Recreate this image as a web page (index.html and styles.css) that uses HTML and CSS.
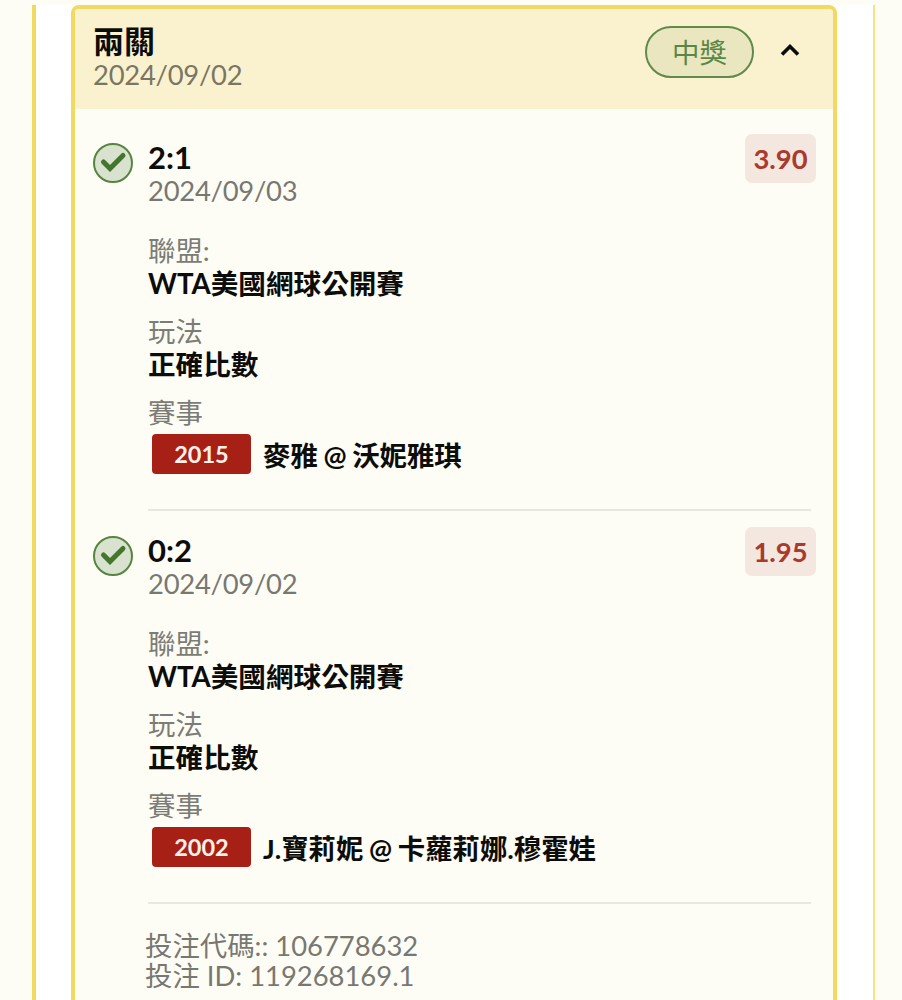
FILE: index.html
```html
<!DOCTYPE html>
<html lang="zh-Hant">
<head>
  <meta charset="UTF-8">
  <title>投注紀錄</title>
  <link rel="stylesheet" href="styles.css">
</head>
<body>
  <div class="bet-list">
    <div class="bet-card">
      <div class="bet-header">
        <div class="bet-title">
          <h2>兩關</h2>
          <p class="date">2024/09/02</p>
        </div>
        <span class="status">中獎</span>
        <svg class="arrow" width="20" height="14" viewBox="0 0 20 14">
          <path d="M2 11.5 L10 3.5 L18 11.5" />
        </svg>
      </div>

      <div class="bet-body">
        <!-- first leg -->
        <div class="leg">
          <svg class="check" width="40" height="40" viewBox="0 0 40 40">
            <circle cx="20" cy="20" r="19" />
            <path d="M10.5 19 L17 25.5 L30 12.5" />
          </svg>
          <div class="leg-info">
            <h3>2:1</h3>
            <p class="date">2024/09/03</p>
            <div class="field league">
              <p class="label">聯盟:</p>
              <p class="value">WTA美國網球公開賽</p>
            </div>
            <div class="field">
              <p class="label">玩法</p>
              <p class="value">正確比數</p>
            </div>
            <div class="field">
              <p class="label">賽事</p>
              <div class="match">
                <span class="match-no">2015</span>
                <span class="value">麥雅 @ 沃妮雅琪</span>
              </div>
            </div>
          </div>
          <span class="odds">3.90</span>
        </div>

        <!-- second leg -->
        <div class="leg">
          <svg class="check" width="40" height="40" viewBox="0 0 40 40">
            <circle cx="20" cy="20" r="19" />
            <path d="M10.5 19 L17 25.5 L30 12.5" />
          </svg>
          <div class="leg-info">
            <h3>0:2</h3>
            <p class="date">2024/09/02</p>
            <div class="field league">
              <p class="label">聯盟:</p>
              <p class="value">WTA美國網球公開賽</p>
            </div>
            <div class="field">
              <p class="label">玩法</p>
              <p class="value">正確比數</p>
            </div>
            <div class="field">
              <p class="label">賽事</p>
              <div class="match">
                <span class="match-no">2002</span>
                <span class="value">J.寶莉妮 @ 卡蘿莉娜.穆霍娃</span>
              </div>
            </div>
          </div>
          <span class="odds">1.95</span>
        </div>

        <div class="bet-footer">
          <p>投注代碼:: 106778632</p>
          <p>投注 ID: 119268169.1</p>
        </div>
      </div>
    </div>
  </div>
</body>
</html>
```
FILE: styles.css
```css
* {
  box-sizing: border-box;
}

body {
  margin: 0;
  height: 1000px;
  overflow: hidden;
  padding: 5px 27px 0 32px;
  background-color: #fefdf5;
  color: #0c0c0a;
  font-family: Lato, "Noto Sans CJK TC", sans-serif;
  font-size: 27.4px;
  line-height: 33px;
}

h2, h3, p {
  margin: 0;
}

.bet-list {
  height: 1010px;
  padding: 0 36px 0 35px;
  background-color: #fff;
  border-left: 4px solid #f2da62;
  border-right: 2px solid #f5e285;
}

.bet-card {
  height: 1010px;
  border: 4px solid #f2da62;
  border-radius: 8px;
  background-color: #fefdf5;
}

.bet-header {
  display: flex;
  align-items: flex-start;
  height: 100px;
  padding: 15px 33px 0 18px;
  background-color: #faf2cf;
  border-radius: 4px 4px 0 0;
}

.bet-title {
  flex: 1;
}

.bet-title h2 {
  font-size: 31px;
  line-height: 34px;
}

.date {
  color: #787872;
  letter-spacing: -0.25px;
}

.bet-header .date {
  color: #7a7664;
}

.status {
  width: 109px;
  height: 52px;
  margin-top: 2px;
  border: 2px solid #5f8a4b;
  border-radius: 26px;
  background-color: #eae6bf;
  color: #5b8746;
  line-height: 50px;
  text-align: center;
}

.arrow {
  margin: 19px 0 0 26px;
  fill: none;
  stroke: #0c0c0a;
  stroke-width: 3.6;
}

.bet-body {
  padding: 9px 22px 0 18px;
}

.leg {
  display: flex;
  align-items: flex-start;
  position: relative;
  height: 393px;
}

.check {
  margin: 25px 15px 0 0;
}

.check circle {
  fill: #d9e2cf;
  stroke: #55853f;
  stroke-width: 2;
}

.check path {
  fill: none;
  stroke: #43752c;
  stroke-width: 5;
  stroke-linecap: round;
}

.leg-info {
  flex: 1;
  height: 393px;
  padding-top: 23px;
  border-bottom: 2px solid #e8e8e1;
}

.leg-info h3 {
  font-size: 31px;
  line-height: 33px;
}

.field {
  margin-top: 15px;
}

.field.league {
  margin-top: 27px;
}

.label {
  color: #7c7c76;
}

.value {
  font-size: 27.6px;
  font-weight: bold;
}

.match {
  display: flex;
  align-items: center;
  gap: 12px;
  margin: 5px 0 0 4px;
}

.match .value {
  padding-top: 2px;
  font-size: 27.4px;
  word-spacing: -1px;
}

.match-no {
  width: 99px;
  height: 40px;
  border-radius: 4px;
  background-color: #a62016;
  color: #fff1ea;
  font-size: 23.5px;
  font-weight: bold;
  line-height: 41px;
  text-align: center;
}

/* sits over the right end of the leg */
.odds {
  position: absolute;
  top: 16px;
  right: -5px;
  width: 71px;
  height: 49px;
  border-radius: 7px;
  background-color: #f4e7e0;
  color: #a93a2c;
  font-weight: bold;
  line-height: 50px;
  text-align: center;
}

.bet-footer {
  padding: 27px 0 0 52px;
  color: #787872;
  line-height: 30px;
}
```
